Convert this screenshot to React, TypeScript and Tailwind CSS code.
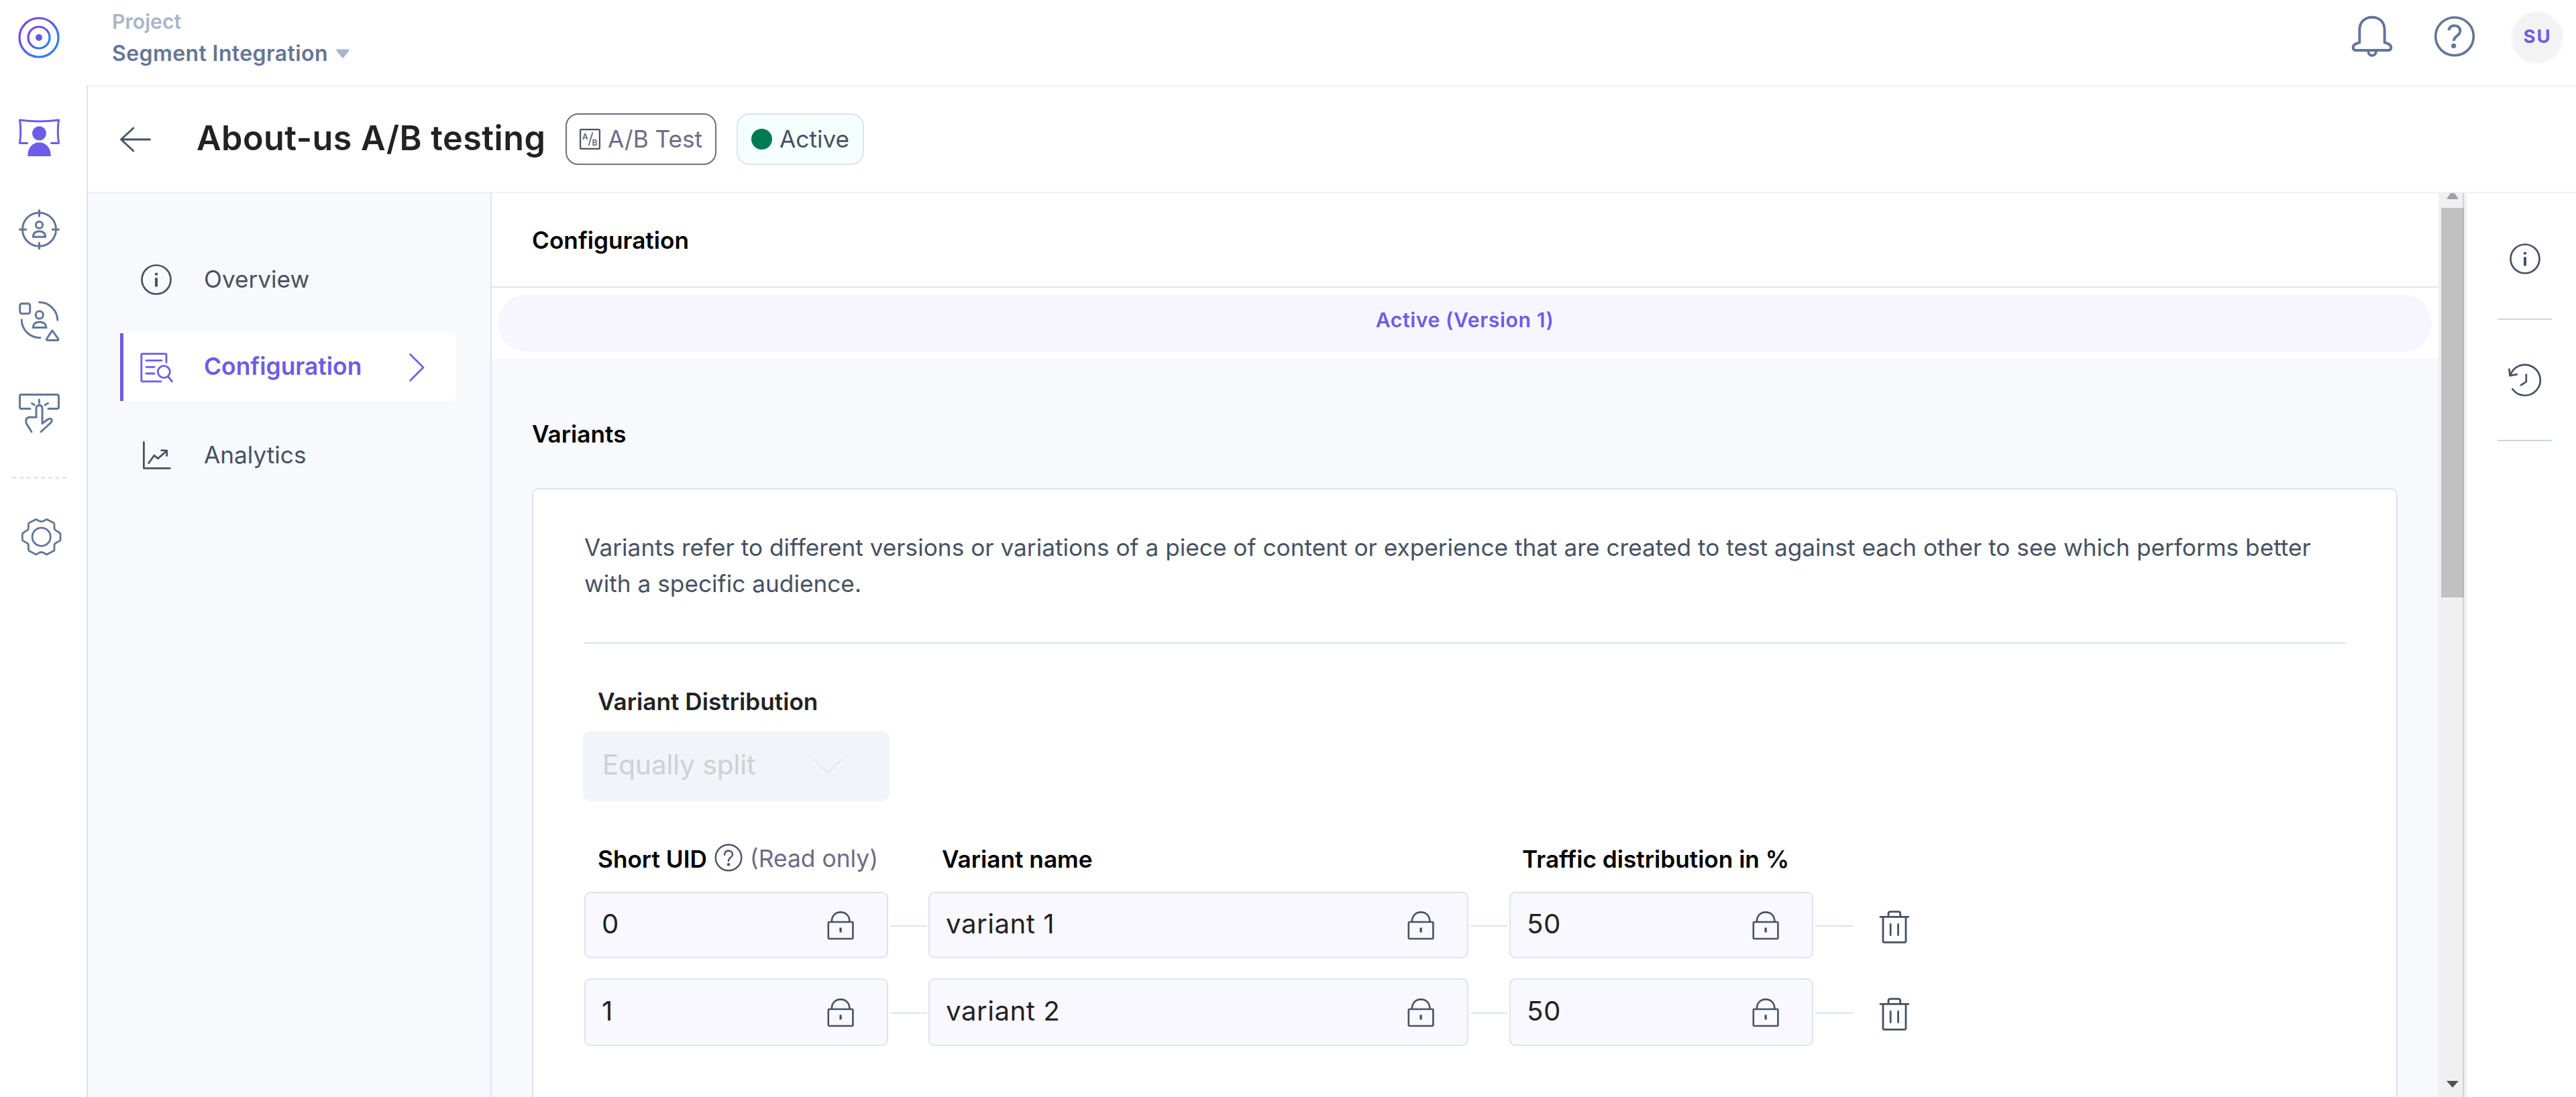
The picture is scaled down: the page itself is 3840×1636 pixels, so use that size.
import React from "react";

type SvgProps = { className?: string };

/* ---------- icons ---------- */

const stroke = {
  fill: "none",
  stroke: "currentColor",
  strokeLinecap: "round" as const,
  strokeLinejoin: "round" as const,
};

function LogoIcon() {
  return (
    <svg className="h-[62px] w-[62px]" viewBox="0 0 62 62" fill="none">
      <defs>
        <linearGradient id="ring" x1="0" y1="0" x2="1" y2="1">
          <stop offset="0.25" stopColor="#7048e8" />
          <stop offset="0.8" stopColor="#2f7bff" />
        </linearGradient>
      </defs>
      <circle cx="31" cy="31" r="29" stroke="url(#ring)" strokeWidth="3.2" />
      <circle cx="31" cy="31" r="16" stroke="url(#ring)" strokeWidth="3.2" />
      <circle cx="31" cy="31" r="5" fill="#6458f0" />
    </svg>
  );
}

function PersonalizeIcon() {
  return (
    <svg className="h-20 w-20 text-[#6c5ce7]" viewBox="0 0 80 80" {...stroke} strokeWidth="3">
      <path d="M22.5 48.5H11.5Q14 30 11.5 14Q40.5 18 69.5 14Q67 30 69.5 48.5H58.5" />
      <circle cx="40.5" cy="33.8" r="10.5" fill="currentColor" stroke="none" />
      <path d="M23.2 68C23.2 54.5 31 47.5 40.5 47.5S57.8 54.5 57.8 68Z" fill="currentColor" stroke="none" />
    </svg>
  );
}

function AudienceIcon() {
  return (
    <svg className="h-20 w-20" viewBox="0 0 80 80" {...stroke} strokeLinecap="butt" strokeWidth="3">
      <circle cx="40.5" cy="40.2" r="25" />
      <path d="M40.5 10.6V21.5M40.5 59V70M10.2 40.2H22M59 40.2H70.7" />
      <circle cx="40.5" cy="33.4" r="5" />
      <path d="M31.2 51.3Q31.5 43 40.5 43T49.8 51.3Z" />
    </svg>
  );
}

function AttributesIcon() {
  return (
    <svg className="h-20 w-20" viewBox="0 0 80 80" {...stroke} strokeWidth="3">
      <rect x="11.7" y="13.7" width="15" height="15" rx="3" />
      <path d="M40.5 11.8A27.3 27.3 0 0 1 67.8 38.2" />
      <path d="M14.2 38A27.3 27.3 0 0 0 42 64.8" />
      <circle cx="40.8" cy="30.7" r="5.6" />
      <path d="M31.2 49.6Q31.5 41.2 41 41.2T51 49.6Z" />
      <path d="M59.9 53.8L51.8 66Q50.6 68.4 53 68.4H67.5Q70 68.4 68.6 66Z" />
    </svg>
  );
}

function TouchIcon() {
  return (
    <svg className="h-20 w-20" viewBox="0 0 80 80" {...stroke} strokeWidth="3">
      <path d="M27 33.5H14Q11.5 33.5 11.5 31V15Q11.5 12.5 14 12.5H67Q69.5 12.5 69.5 15V31Q69.5 33.5 67 33.5H54" />
      <path d="M40.5 20V25.3M29.5 25.5L33.2 28M53.5 25.5L49 28" />
      <path d="M29 68L21.3 55.5Q19 46.2 26.5 46.2H36V33Q36.2 28.6 40.5 28.6T45 33V55.5L53.5 49.2Q59 47.2 59.4 51.2Q59 53.5 57 55L43 68" />
    </svg>
  );
}

function GearIcon() {
  return (
    <svg className="h-20 w-20" viewBox="22 761 80 80" {...stroke} strokeWidth="2.8">
      <path d="M53.8 774.4L59 777.2Q61.7 778.2 64.4 777.2L69.6 774.4L80 779.8Q81 780.5 81 781.8V787.6Q81 789.6 82.6 790.6L89.4 795Q90 795.6 90 797V804.6Q90 806 89.4 806.4L82.6 810.2Q81 811.2 81 813V819.6Q81 821 80 821.5L69.6 827L64.4 824Q61.7 823 59 824L53.8 827L43.4 821.5Q42.4 821 42.4 819.6V813Q42.4 811.2 40.8 810.2L34 806.4Q33.4 806 33.4 804.6V797Q33.4 795.6 34 795L40.8 790.6Q42.4 789.6 42.4 787.6V781.8Q42.4 780.5 43.4 779.8Z" />
      <circle cx="61.7" cy="800.7" r="13.6" />
    </svg>
  );
}

function BellIcon() {
  return (
    <svg className="h-[72px] w-[72px]" viewBox="300 54 216 216" {...stroke} strokeWidth="12">
      <path d="M352 190V134C352 98 376 77 408 77S464 98 464 134V190C480 196 492 198 493 211Q493 225 482 225H334Q323 225 323 211C324 198 336 196 352 190Z" />
      <path d="M391 228C391 255 426 255 426 228" />
    </svg>
  );
}

function HelpIcon() {
  return (
    <svg className="h-[72px] w-[72px]" viewBox="669 54 216 216" {...stroke} strokeWidth="11">
      <circle cx="777" cy="163" r="85" />
      <path d="M751 136C753 121 763 115 777 115C792 115 802 124 802 138C802 160 775 160 773 183" strokeWidth="12" strokeLinecap="butt" />
      <circle cx="773" cy="205" r="11" fill="currentColor" stroke="none" />
    </svg>
  );
}

function SmallHelpIcon() {
  return (
    <svg className="h-[42px] w-[42px] text-[#475161]" viewBox="0 0 42 42" {...stroke} strokeWidth="2.4">
      <circle cx="21" cy="21" r="19.3" />
      <path d="M15 16.8C15.3 13 17.6 10.8 21 10.8C24.6 10.8 27 13.2 27 16.3C27 21 21 20.8 21 26" />
      <circle cx="21" cy="31.2" r="2.2" fill="currentColor" stroke="none" />
    </svg>
  );
}

function InfoIcon() {
  return (
    <svg className="h-[46px] w-[46px] text-[#475161]" viewBox="0 0 46 46" {...stroke} strokeWidth="2.7">
      <circle cx="23" cy="23" r="21.5" />
      <path d="M23 20.2V33.6M23 13V16.4" strokeWidth="4" strokeLinecap="butt" />
    </svg>
  );
}

function ConfigIcon() {
  return (
    <svg className="h-[46px] w-[50px]" viewBox="208 524 50 46" {...stroke} strokeWidth="2.8">
      <path d="M248 539.5V528.5Q248 526.7 246.2 526.7H212.7Q210.8 526.7 210.8 528.5V566Q210.8 567.8 212.7 567.8H240" />
      <path d="M218 536.7H241M218 546.3H230M218 556H230" />
      <ellipse cx="244.3" cy="553.5" rx="9" ry="8.8" />
      <path d="M250.5 560.5L256.5 567.8" />
    </svg>
  );
}

function AnalyticsIcon() {
  return (
    <svg className="h-[46px] w-[46px]" viewBox="210 655 46 46" {...stroke} strokeWidth="2.8">
      <path d="M214.4 658.5V697.3H253.3" />
      <path d="M221.7 689.5L229.8 678.2L235.6 682.8L248.5 671.2M240.8 670.7L248.8 670.9L248.6 678.6" />
    </svg>
  );
}

function HistoryIcon() {
  return (
    <svg className="h-[52px] w-[52px] text-[#475161]" viewBox="3738 541 52 52" {...stroke} strokeWidth="2.7">
      <path d="M3745.3 580.3A22.9 22.9 0 1 0 3742 560" />
      <path d="M3740.4 550.5L3741.6 560.2L3751.8 558.4" />
      <path d="M3765.8 558.5V569.3L3758 574.3" />
    </svg>
  );
}

function LockIcon() {
  return (
    <svg className="h-[44px] w-[40px] text-[#475161]" viewBox="1234 1357 40 44" {...stroke} strokeWidth="2.6">
      <rect x="1235.8" y="1374" width="36.6" height="25" rx="1.5" />
      <path d="M1240.8 1373.5C1240.8 1364 1247 1359.4 1254.1 1359.4S1267.4 1364 1267.4 1373.5" />
      <path d="M1254.1 1382.5V1389.5" strokeWidth="3.4" strokeLinecap="butt" />
    </svg>
  );
}

function TrashIcon() {
  return (
    <svg className="h-[52px] w-[48px] text-[#475161]" viewBox="2800 1357 48 52" {...stroke} strokeWidth="2.8">
      <path d="M2803 1367.4H2844.8" />
      <path d="M2815 1367V1362.5Q2815 1359.6 2818 1359.6H2829.8Q2832.8 1359.6 2832.8 1362.5V1367" />
      <path d="M2807 1367.4V1403.5Q2807 1405.4 2809 1405.4H2839Q2841 1405.4 2841 1403.5V1367.4" />
      <path d="M2818.2 1378.5V1394.5M2829.6 1378.5V1394.5" />
    </svg>
  );
}

function AbIcon() {
  return (
    <svg className="h-[31px] w-[31px] text-[#475161]" viewBox="0 0 31 31" fill="none" stroke="currentColor">
      <rect x="1.1" y="1.1" width="28.8" height="28.8" rx="1.5" strokeWidth="2.2" />
      <path d="M19.5 5.5L13.5 25" strokeWidth="1.5" />
      <g fill="currentColor" stroke="none" fontFamily="Inter, sans-serif" fontSize="12" fontWeight="500">
        <text x="4" y="16">A</text>
        <text x="18.5" y="24.5">B</text>
      </g>
    </svg>
  );
}

/* ---------- pieces ---------- */

function NavItem({ icon, label, active }: { icon: React.ReactNode; label: string; active?: boolean }) {
  return (
    <div
      className={
        active
          ? "flex h-[101px] items-center rounded-r-[10px] border-l-[5px] border-[#6c5ce7] bg-white pl-6 text-[#6c5ce7]"
          : "flex h-[101px] items-center border-l-[5px] border-transparent pl-6 text-[#475161]"
      }
    >
      <div className="flex w-[50px] justify-center">{icon}</div>
      <span
        className={
          active
            ? "-mt-[2px] ml-[46px] w-[305px] text-[35.4px] font-semibold leading-[44px]"
            : "-mt-[2px] ml-[46px] text-[35.2px] leading-[44px]"
        }
      >
        {label}
      </span>
      {active && (
        <svg className="h-11 w-6" viewBox="0 0 24 44" {...stroke} strokeWidth="2.6">
          <path d="M2.5 2.5L22 22L2.5 41.5" />
        </svg>
      )}
    </div>
  );
}

function LockedInput({ value, className }: { value: string; className: string }) {
  return (
    <div className={`${className} flex h-full items-center justify-between rounded-[9px] border-2 border-[#dde3ee] bg-[#f9f8ff] pl-6 pr-[49px]`}>
      <span className="-mt-[3px] text-[40.2px] leading-[50px] tracking-[0.5px] text-[#222222]">{value}</span>
      <LockIcon />
    </div>
  );
}

function Connector({ className }: SvgProps) {
  return <div className={`${className} mt-[3px] h-[2.5px] bg-[#dde3ee]`} />;
}

function VariantRow({ uid, name, traffic, className }: { uid: string; name: string; traffic: string; className: string }) {
  return (
    <div className={`${className} flex items-center`}>
      <LockedInput value={uid} className="w-[453px]" />
      <Connector className="ml-[3px] w-[55px]" />
      <LockedInput value={name} className="ml-[2px] w-[805px]" />
      <Connector className="ml-[3px] w-[55px]" />
      <LockedInput value={traffic} className="ml-[3px] w-[453px]" />
      <Connector className="ml-[3px] w-[57px]" />
      <div className="ml-[37px] mt-[7px]">
        <TrashIcon />
      </div>
    </div>
  );
}

const label = "text-[35.2px] font-semibold leading-[44px] text-black";

export default function App() {
  return (
    <div className="flex h-[1636px] w-[3840px] flex-col overflow-hidden bg-white font-['Inter',sans-serif] text-[#222222]">
      {/* top bar */}
      <header className="flex h-[127px] shrink-0 justify-between">
        <div className="flex">
          <div className="pl-[27px] pt-[25px]">
            <LogoIcon />
          </div>
          <div className="pl-[78px] pt-[12px] font-semibold">
            <div className="text-[30.2px] leading-[40px] text-[#a9b6cb]">Project</div>
            <div className="mt-[7px] flex items-center">
              <span className="text-[32px] leading-[42px] tracking-[0.4px] text-[#647696]">Segment Integration</span>
              <svg className="ml-[11px] h-[14px] w-[22px]" viewBox="0 0 22 14">
                <path d="M2 0.5H20Q21.5 0.8 20.8 2L12.2 13Q11 14 9.8 13L1.2 2Q0.5 0.8 2 0.5Z" fill="#a9b6cb" />
              </svg>
            </div>
          </div>
        </div>
        <div className="flex pr-[18px] pt-[16px] text-[#647696]">
          <div className="pt-[2px]">
            <BellIcon />
          </div>
          <div className="ml-[51px] pt-[2px]">
            <HelpIcon />
          </div>
          <div className="ml-[47px] flex h-20 w-20 items-center justify-center rounded-full border-[3px] border-[#f7f9fc] bg-[#f3f3f4] pb-[3px] pl-[1px] text-[27.5px] font-bold leading-none tracking-[2px] text-[#6c5ce7]">
            SU
          </div>
        </div>
      </header>

      <div className="flex min-h-0 flex-1">
        {/* left rail */}
        <nav className="flex w-[129px] shrink-0 flex-col pl-[18px] pt-[38px] text-[#647696]">
          <div className="flex flex-col gap-[57px]">
            <PersonalizeIcon />
            <AudienceIcon />
            <AttributesIcon />
            <TouchIcon />
          </div>
          <svg className="mt-[55px] h-[3px] w-[82px]" viewBox="0 0 82 3">
            <path d="M0 1.5H82" stroke="#dde3ee" strokeWidth="2.4" strokeDasharray="6.6 4.1" />
          </svg>
          <div className="ml-1 mt-[47px]">
            <GearIcon />
          </div>
        </nav>

        <div className="flex min-w-0 flex-1 flex-col border-l-2 border-[#dde3ee]">
          {/* title bar */}
          <div className="flex h-[161px] shrink-0 items-center border-y-2 border-[#edf1f7] pl-[47px]">
            <svg className="h-[40px] w-[48px] text-[#475161]" viewBox="178 187.5 48 40" {...stroke} strokeWidth="2.8">
              <path d="M223.5 207.5H180.5M198.8 190.5L180.5 207.5L198.8 224.5" />
            </svg>
            <h1 className="-mt-[4px] ml-[67px] w-[550px] whitespace-nowrap text-[50.3px] font-semibold leading-[64px] tracking-[0.48px]">
              About-us A/B testing
            </h1>
            <div className="flex h-[77px] w-[225px] items-center rounded-[19px] border-[2.5px] border-[#6e6b86] pl-[19px]">
              <AbIcon />
              <span className="-mt-[2px] ml-[11px] whitespace-nowrap text-[35.2px] leading-[44px] text-[#6e6b86]">A/B Test</span>
            </div>
            <div className="ml-[30px] flex h-[77px] w-[190px] items-center rounded-[19px] border-2 border-[#dde3ee] bg-[#f5fffd] pl-[20px]">
              <div className="h-[31px] w-[31px] rounded-full bg-[#007a52]" />
              <span className="-mt-[2px] ml-[11px] text-[35.2px] leading-[44px] text-[#475161]">Active</span>
            </div>
          </div>

          <div className="flex min-h-0 flex-1">
            {/* section menu */}
            <aside className="flex w-[602px] shrink-0 flex-col gap-[30px] border-r-2 border-[#dde3ee] bg-[#f7f9fd] pl-[48px] pr-[51px] pt-[78px]">
              <NavItem icon={<InfoIcon />} label="Overview" />
              <NavItem icon={<ConfigIcon />} label="Configuration" active />
              <NavItem icon={<AnalyticsIcon />} label="Analytics" />
            </aside>

            {/* content */}
            <main className="flex min-w-0 flex-1 flex-col bg-[#f7f9fd]">
              <div className="h-[141px] shrink-0 border-b-2 border-[#dde3ee] bg-white pl-[60px] pt-[48px]">
                <h2 className="text-[35.2px] font-semibold leading-[44px] text-black">Configuration</h2>
              </div>
              <div className="shrink-0 bg-white px-[9px] pb-[10px] pr-[10px] pt-[10px]">
                <div className="flex h-[86px] items-center justify-center rounded-full bg-[#f7f6ff] pb-[9px] text-[30.2px] font-semibold tracking-[0.6px] text-[#6c5ce7]">
                  Active (Version 1)
                </div>
              </div>
              <div className="flex min-h-0 flex-1 flex-col pl-[60px] pr-[61px] pt-[90px]">
                <h3 className={label}>Variants</h3>
                <section className="mt-[59px] flex-1 rounded-t-[10px] border-2 border-b-0 border-[#dde3ee] bg-white pl-[76px] pr-[75px] pt-[59px]">
                  <p className="whitespace-nowrap border-b-2 border-[#dde3ee] pb-[61px] text-[35.23px] leading-[54px] text-[#475161]">
                    Variants refer to different versions or variations of a piece of content or experience that are created to test against each other to see which performs better
                    <br />
                    with a specific audience.
                  </p>
                  <div className="pl-[20px] pt-[64px]">
                    <div className="text-[35.2px] font-semibold leading-[44px] text-[#222222]">Variant Distribution</div>
                  </div>
                  <div className="-ml-[2px] mt-[22px] flex h-[105px] w-[457px] items-center justify-between rounded-[12px] bg-[#f1f4f9] pl-[29px] pr-[70px]">
                    <span className="-mt-[4px] text-[40.4px] leading-[50px] text-[#cfd0d3]">Equally split</span>
                    <svg className="h-6 w-[44px] text-[#e3e8f0]" viewBox="0 0 44 24" {...stroke} strokeWidth="2.2">
                      <path d="M2 2L22 22L42 2" />
                    </svg>
                  </div>
                  <div className="mt-[64px] flex h-11 items-center whitespace-nowrap pl-[20px]">
                    <div className="flex w-[513px] items-center">
                      <span className={label}>Short UID</span>
                      <div className="-mt-1 ml-[11px]">
                        <SmallHelpIcon />
                      </div>
                      <span className="ml-[11px] text-[35.4px] leading-[44px] text-[#6e6b86]">(Read only)</span>
                    </div>
                    <span className={`${label} w-[865px]`}>Variant name</span>
                    <span className={label}>Traffic distribution in %</span>
                  </div>
                  <VariantRow uid="0" name="variant 1" traffic="50" className="mt-[27px] h-[99px]" />
                  <VariantRow uid="1" name="variant 2" traffic="50" className="mt-[30px] h-[101px]" />
                </section>
              </div>
            </main>

            {/* scroll bar */}
            <div className="relative flex w-[42px] shrink-0 flex-col items-center bg-[#f0f0f1]">
              <svg className="mr-[0px] h-[9px] w-[18px]" viewBox="0 0 18 9">
                <path d="M6 0H12L18 9H0Z" fill="#a0a0a4" />
              </svg>
              <div className="mt-[13px] h-[581px] w-[34px] bg-[#c1c1c1]" />
              <svg className="mb-[14px] mt-auto h-[10px] w-[18px]" viewBox="0 0 18 10">
                <path d="M0 0H18L9 10Z" fill="#505050" />
              </svg>
              <div className="absolute inset-y-0 left-[36px] w-[2px] bg-[#8fa0b4]/35" />
            </div>

            {/* tool rail */}
            <aside className="flex w-[163px] shrink-0 flex-col items-center pl-[10px] pt-[75px]">
              <InfoIcon />
              <hr className="mt-[66px] w-[81px] border-t-[2.5px] border-[#cfd5e0]" />
              <div className="mt-[64px]">
                <HistoryIcon />
              </div>
              <hr className="mt-[63px] w-[81px] border-t-[2.5px] border-[#cfd5e0]" />
            </aside>
          </div>
        </div>
      </div>
    </div>
  );
}
